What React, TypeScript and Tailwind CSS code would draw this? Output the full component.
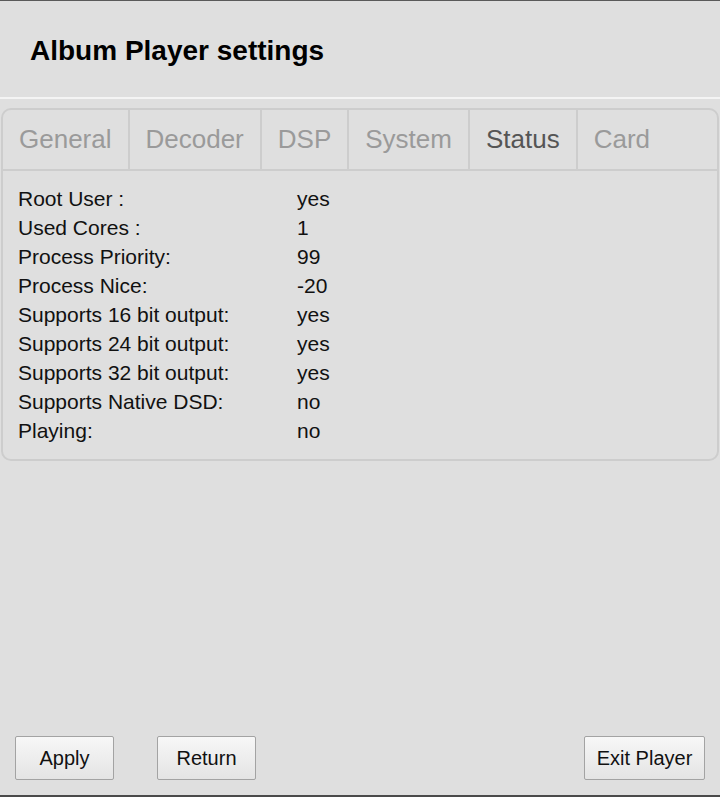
const tabs = ['General', 'Decoder', 'DSP', 'System', 'Status', 'Card'];

const rows: [string, string][] = [
  ['Root User :', 'yes'],
  ['Used Cores :', '1'],
  ['Process Priority:', '99'],
  ['Process Nice:', '-20'],
  ['Supports 16 bit output:', 'yes'],
  ['Supports 24 bit output:', 'yes'],
  ['Supports 32 bit output:', 'yes'],
  ['Supports Native DSD:', 'no'],
  ['Playing:', 'no'],
];

function Btn({ label, className }: { label: string; className?: string }) {
  return (
    <button
      className={
        'h-[44px] border border-[#a3a3a3] rounded-[2px] bg-gradient-to-b from-[#f7f7f7] to-[#e4e4e4] text-[20px] text-[#111] ' +
        (className ?? '')
      }
    >
      {label}
    </button>
  );
}

export default function App() {
  return (
    <div className="h-[797px] flex flex-col bg-[#dfdfdf] border-t border-t-[#5a5a5a] border-b-2 border-b-[#4a4a4a] font-['Liberation_Sans',Arial,sans-serif]">
      <div className="h-[96px] flex items-center pl-[30px] pt-[3px] text-[28px] font-bold text-black">
        Album Player settings
      </div>
      <div className="h-[2px] bg-[#f4f4f4]" />

      <div className="mt-[9px] mx-[1px] border-2 border-[#cdcdcd] rounded-[10px]">
        <div className="flex h-[61px] border-b-2 border-[#cdcdcd]">
          {tabs.map((t) => (
            <div
              key={t}
              className={
                'flex items-center px-[16px] text-[26px] ' +
                (t === 'Card' ? '' : 'border-r-2 border-[#cdcdcd] ') +
                (t === 'Status' ? 'text-[#555]' : 'text-[#9a9a9a]')
              }
            >
              {t}
            </div>
          ))}
        </div>
        <div className="pt-[13px] pb-[14px] pl-[15px] grid grid-cols-[279px_1fr] text-[21px] leading-[29px] text-[#111]">
          {rows.map(([k, v]) => (
            <div key={k} className="contents">
              <div>{k}</div>
              <div>{v}</div>
            </div>
          ))}
        </div>
      </div>

      <div className="flex-1" />

      <div className="flex px-[15px] pb-[15px]">
        <Btn label="Apply" className="w-[99px]" />
        <Btn label="Return" className="w-[99px] ml-[43px]" />
        <Btn label="Exit Player" className="w-[121px] ml-auto" />
      </div>
    </div>
  );
}
